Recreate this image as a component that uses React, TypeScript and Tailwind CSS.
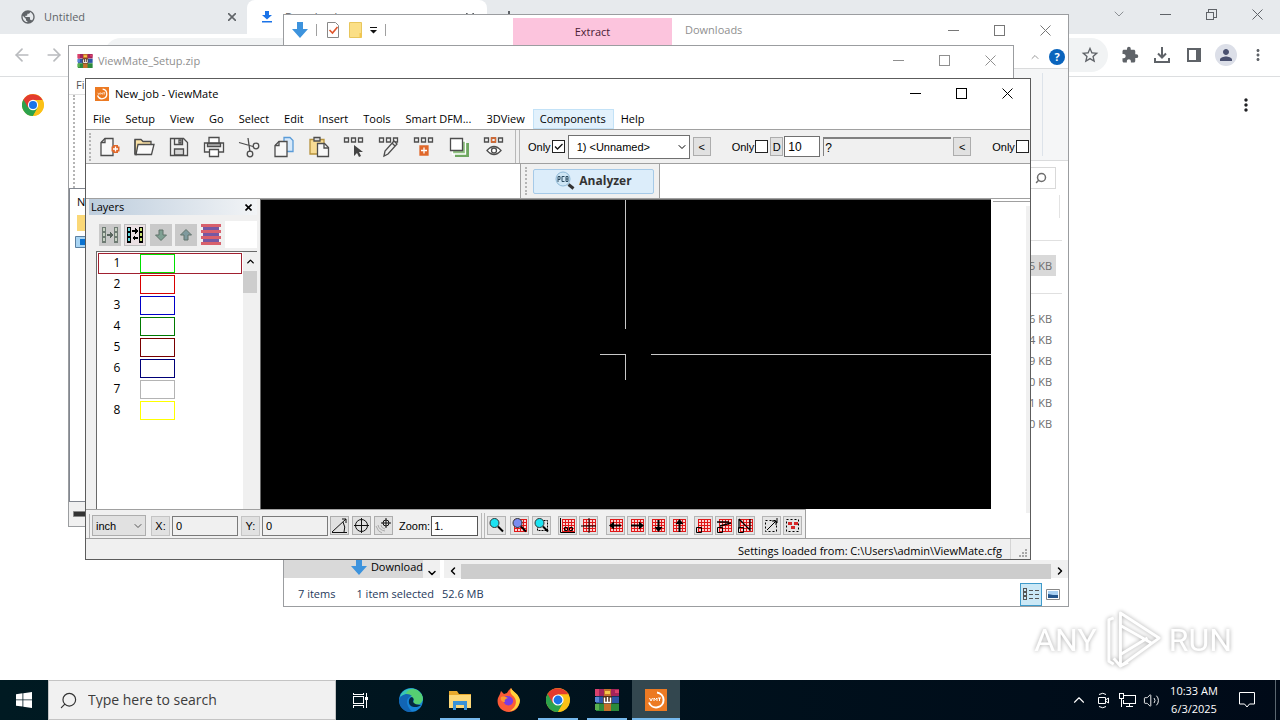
import React from 'react';
import {
  ArrowLeft,
  ArrowRight,
  ChevronDown,
  ChevronLeft,
  ChevronRight,
  ChevronUp,
  Search,
  Volume2,
} from 'lucide-react';
import { MdExtension, MdMoreVert, MdPerson, MdPublic, MdStarOutline } from 'react-icons/md';

type IconProps = { className?: string };

/* ---------- shared pieces ---------- */

function CaptionButtons({ restore = false, className = '' }: { restore?: boolean; className?: string }) {
  return (
    <div className={`flex h-full shrink-0 ${className}`}>
      <button aria-label="Minimize" className="flex w-[46px] items-center justify-center">
        <svg width="11" height="11" viewBox="0 0 11 11" stroke="currentColor" shapeRendering="crispEdges">
          <path d="M0 5.5h11" />
        </svg>
      </button>
      <button aria-label="Maximize" className="flex w-[46px] items-center justify-center">
        <svg width="11" height="11" viewBox="0 0 11 11" stroke="currentColor" fill="none" shapeRendering="crispEdges">
          {restore ? <path d="M.5 3.5h7v7h-7zM2.5 3V.5h8v8H8" /> : <path d="M.5.5h10v10H.5z" />}
        </svg>
      </button>
      <button aria-label="Close" className="flex w-[46px] items-center justify-center">
        <svg width="11" height="11" viewBox="0 0 11 11" stroke="currentColor">
          <path d="M.5.5l10 10M10.5.5l-10 10" />
        </svg>
      </button>
    </div>
  );
}

function Grip({ className = '' }: IconProps) {
  return <div className={`w-0 border-l-2 border-dotted border-[#b5b5b5] ${className}`} />;
}

function ChromeLogo({ className }: IconProps) {
  return (
    <svg className={className} viewBox="0 0 24 24">
      <circle cx="12" cy="12" r="12" fill="#fbc116" />
      <path d="M12 12L1.6 6A12 12 0 0 0 12 24l5.2-9z" fill="#2ca24c" />
      <path d="M1.6 6A12 12 0 0 1 22.4 6.5H12L6.8 15z" fill="#e33b2e" />
      <path d="M12 24a12 12 0 0 0 10.4-17.5H12l5.2 8.5z" fill="#fbc116" />
      <circle cx="12" cy="12" r="5.6" fill="#fff" />
      <circle cx="12" cy="12" r="4.4" fill="#1a73e8" />
    </svg>
  );
}

function WinRarLogo({ className }: IconProps) {
  return (
    <svg className={className} viewBox="0 0 24 22">
      <path d="M1 0h23v7H1z" fill="#a3245a" />
      <path d="M1 7.5h23v6.5H1z" fill="#2d55a5" />
      <path d="M1 14.5h23V22H1z" fill="#2c8a3c" />
      <path d="M0 0h4v7H0zM20 1h4v3h-4z" fill="#d9416c" />
      <path d="M0 8h4v5H0z" fill="#5a87d6" />
      <path d="M0 15h4v6H0z" fill="#58b04f" />
      <path d="M9 0h7v22H9z" fill="#c4702b" />
      <path d="M10 2h5v3h-5z" fill="#f5c94a" />
      <path d="M8 7h9v8H8z" fill="#4c2b17" />
      <path d="M9.5 8.5v5h6v-5M12.5 8v5" fill="none" stroke="#fff" strokeWidth="1.5" />
    </svg>
  );
}

function ViewMateLogo({ className }: IconProps) {
  return (
    <svg className={className} viewBox="0 0 22 22">
      <rect width="22" height="22" fill="#ec7a23" />
      <path d="M12 3.500a7.500 7.500 0 1 1-8 10" fill="none" stroke="#fff" strokeWidth="2" />
      <path d="M4.500 9l1.500 3 1.500-3M9 12V9l1.500 1.500L12 9v3M13 9h3M14.500 9v3" fill="none" stroke="#fff" />
    </svg>
  );
}

function DownArrow({ className }: IconProps) {
  return (
    <svg className={className} viewBox="0 0 16 16">
      <path d="M5 0h6v7h5l-8 9-8-9h5z" fill="#3d93dd" />
    </svg>
  );
}

/* ---------- browser ---------- */

function Browser() {
  return (
    <div className="flex min-h-0 flex-1 flex-col bg-white text-[#5f6368]">
      <div className="flex h-[34px] shrink-0 bg-[#e7eaed]">
        <div className="flex w-[247px] items-center pr-[11px] pl-5 text-[11px] text-[#606468]">
          <MdPublic className="mr-2 size-4" />
          <span>Untitled</span>
          <button aria-label="Close tab" className="ml-auto flex w-2 items-center justify-center">
            <svg width="8" height="8" viewBox="0 0 8 8" stroke="currentColor" strokeWidth="1.6">
              <path d="M0 0l8 8M8 0L0 8" />
            </svg>
          </button>
        </div>
        <div className="flex w-[240px] items-center rounded-t-lg bg-white pr-[13px] pl-[14px] text-[11px]">
          <svg className="mr-3 size-3" viewBox="0 0 12 12" fill="#1a73e8">
            <path d="M4 0h4v4h3L6 8.500 1 4h3zM1 10h10v1.500H1z" />
          </svg>
          <span>Downloads</span>
          <button aria-label="Close tab" className="ml-auto flex w-2 items-center justify-center">
            <svg width="8" height="8" viewBox="0 0 8 8" stroke="currentColor" strokeWidth="1.6">
              <path d="M0 0l8 8M8 0L0 8" />
            </svg>
          </button>
        </div>
        <button aria-label="New tab" className="flex w-11 items-center justify-center">
          <svg width="12" height="12" viewBox="0 0 12 12" stroke="currentColor" strokeWidth="2"><path d="M6 0v12M0 6h12" /></svg>
        </button>
        <div className="ml-auto flex h-[28px]">
          <button aria-label="Search tabs" className="flex w-[46px] items-center justify-center">
            <ChevronDown className="size-4" strokeWidth={1} />
          </button>
          <CaptionButtons restore />
        </div>
      </div>
      <div className="flex h-[43px] shrink-0 items-center border-b border-[#dcdee0] pr-[6px] pl-3">
        <button aria-label="Back" className="mr-3 text-[#b9bbbe]"><ArrowLeft className="size-5" strokeWidth={2} /></button>
        <button aria-label="Forward" className="mr-10 text-[#b9bbbe]"><ArrowRight className="size-5" strokeWidth={2} /></button>
        <div className="flex h-[34px] flex-1 items-center justify-end rounded-full bg-[#f1f3f4] pr-2">
          <button aria-label="Bookmark"><MdStarOutline className="size-5" /></button>
        </div>
        <div className="ml-[6px] flex items-center">
          <button aria-label="Extensions" className="flex w-8 justify-center"><MdExtension className="size-[18px]" /></button>
          <button aria-label="Downloads" className="flex w-8 justify-center">
            <svg className="size-4" viewBox="0 0 16 16" fill="none" stroke="currentColor" strokeWidth="2">
              <path d="M8 0v10M4 6.500l4 4 4-4M1 11v4h14v-4" />
            </svg>
          </button>
          <button aria-label="Side panel" className="flex w-8 justify-center">
            <svg className="h-[14px] w-[14px]" viewBox="0 0 14 14">
              <path d="M1 1h12v12H1z" fill="none" stroke="currentColor" strokeWidth="2" />
              <path d="M9 0h5v14H9z" fill="currentColor" />
            </svg>
          </button>
          <button aria-label="Profile" className="flex w-8 justify-center">
            <span className="flex size-[22px] items-center justify-center rounded-full bg-[#dcdfe8] text-[#4a5170]"><MdPerson className="size-[18px]" /></span>
          </button>
          <button aria-label="Menu" className="flex w-8 justify-center"><MdMoreVert className="size-[18px]" /></button>
        </div>
      </div>
      <div className="flex items-start justify-between pt-4 pr-6 pl-[22px]">
        <ChromeLogo className="mt-px size-[22px]" />
        <button aria-label="More actions" className="pt-[2px] text-[#202124]"><MdMoreVert className="size-5" /></button>
      </div>
    </div>
  );
}

function Watermark() {
  return (
    <div className="absolute right-12 bottom-2 flex h-16 items-center gap-2 font-['Roboto',sans-serif] text-[32px] leading-none text-white drop-shadow-[0_0_2px_rgba(0,0,0,0.35)]">
      <span>ANY</span>
      <svg className="h-[62px] w-[56px]" viewBox="0 0 58 62" fill="none" stroke="#fff" strokeWidth="3" strokeLinejoin="round">
        <path d="M16 3l40 26-40 29zM16 16l32 18M16 46l28-17M9 8L4 10v43l5 3M9 50l7 8 8-4" />
      </svg>
      <span>RUN</span>
    </div>
  );
}

/* ---------- file explorer ---------- */

const sizes = ['6 KB', '4 KB', '9 KB', '0 KB', '1 KB', '0 KB'];

function Explorer() {
  return (
    <section className="absolute top-[14px] right-[211px] bottom-[73px] left-[283px] flex flex-col border border-[#9b9da0] bg-white text-[#6d6d6d]">
      <header className="flex h-[30px] shrink-0 items-center">
        <DownArrow className="ml-2 size-4" />
        <span className="mx-2 h-3 w-px bg-[#a0a0a0]" />
        <svg className="ml-[2px] h-4 w-3" viewBox="0 0 12 16">
          <path d="M.5.5h8l3 3v12H.5z" fill="#fff" stroke="#888" />
          <path d="M2.500 8l3 3 5-6" fill="none" stroke="#e0552b" strokeWidth="1.6" />
        </svg>
        <svg className="ml-[10px] h-4 w-[13px]" viewBox="0 0 13 16">
          <path d="M.5.5h12v15H.5z" fill="#fbdf86" stroke="#e8c65c" />
          <path d="M10.500 11h2v4.500h-2z" fill="#f3c64e" />
        </svg>
        <svg className="ml-2 h-[7px] w-[7px]" viewBox="0 0 7 7" fill="#111"><path d="M0 0h7v1H0zM0 3h7L3.500 6.500z" /></svg>
        <span className="mx-2 h-3 w-px bg-[#a0a0a0]" />
        <div className="ml-[119px] flex h-[27px] w-[159px] items-center justify-center self-end bg-[#fcc4dd] text-[#4a2034]">Extract</div>
        <span className="ml-[13px] text-[#8f8f8f]">Downloads</span>
        <CaptionButtons className="ml-auto text-[#777]" />
      </header>
      <div className="flex h-[23px] shrink-0 items-center justify-end pr-[3px]">
        <ChevronUp className="mr-2 size-3 text-[#9a9a9a]" />
        <span className="flex size-4 items-center justify-center rounded-full bg-[#0a64bd] text-[11px] font-bold text-white">?</span>
      </div>
      <div className="flex h-[93px] shrink-0 justify-end border-y border-[#dadbdc] bg-[#f5f6f7] py-1">
        <span className="mr-[25px] w-px bg-[#dde3ea]" />
      </div>
      <div className="flex h-[34px] shrink-0 items-center justify-end pr-3">
        <div className="flex h-[22px] w-[200px] items-center justify-end border border-[#d9d9d9] pr-2">
          <Search className="size-3 -scale-x-100" strokeWidth={3} />
        </div>
      </div>
      <div className="mr-2 flex h-[23px] shrink-0 border-r border-[#e3e3e3]" />
      <div className="flex min-h-0 flex-1 flex-col items-end overflow-hidden pt-[22px]">
        <div className="mr-[6px] w-[200px] border-t border-[#e0e0e0]" />
        <div className="mt-[14px] mr-3 flex h-[21px] w-[200px] items-center justify-end bg-[#d9d9d9] pr-1">5 KB</div>
        <div className="mt-[17px] mr-[6px] w-[200px] border-t border-[#e0e0e0]" />
        <ul className="mt-[14px] mr-3 w-[200px] pr-1 text-right">
          {sizes.map((size, i) => (
            <li key={i} className="h-[21px] leading-[21px]">{size}</li>
          ))}
        </ul>
      </div>
      <div className="flex h-[26px] shrink-0 pb-1 text-black">
        <div className="flex w-[139px] items-center justify-end bg-[#d9d9d9]">
          <DownArrow className="mr-1 size-4" />
          <span>Download</span>
        </div>
        <div className="mt-1 flex w-[17px] items-center justify-center bg-[#f0f0f0] pt-2"><ChevronDown className="size-3" strokeWidth={3} /></div>
        <div className="mt-1 ml-1 flex flex-1 items-center bg-[#f0f0f0] pt-1">
          <span className="flex w-[17px] justify-center"><ChevronLeft className="size-3" strokeWidth={3} /></span>
          <span className="h-[15px] flex-1 bg-[#cdcdcd]" />
          <span className="flex w-[17px] justify-center"><ChevronRight className="size-3" strokeWidth={3} /></span>
        </div>
      </div>
      <footer className="flex h-6 shrink-0 items-center pl-[14px] text-[#1e395b]">
        <span>7 items</span>
        <span className="ml-[21px]">1 item selected</span>
        <span className="ml-2">52.6 MB</span>
        <button aria-label="Details view" className="ml-auto flex h-[23px] w-[22px] items-center justify-center border border-[#3f9bcb] bg-[#cbe8f6]">
          <svg className="h-[13px] w-[16px]" viewBox="0 0 16 13" fill="none" stroke="#555" shapeRendering="crispEdges">
            <path d="M.5.5h3v3h-3zM.5 4.500h3v3h-3zM.5 8.500h3v3h-3zM6 2.500h4M12 2.500h4M6 6.500h4M12 6.500h4M6 10.500h4M12 10.500h4" />
          </svg>
        </button>
        <button aria-label="Thumbnail view" className="mr-2 ml-1">
          <svg className="h-[11px] w-[14px]" viewBox="0 0 14 11">
            <path d="M.5.5h13v10H.5z" fill="#fff" stroke="#888" />
            <path d="M2 2h10v7H2z" fill="#a9d0f2" />
            <path d="M2 5l5 1 5 0v3H2z" fill="#24558c" />
          </svg>
        </button>
      </footer>
    </section>
  );
}

/* ---------- archive window ---------- */

function ArchiveWindow() {
  return (
    <section className="absolute top-[45px] right-[266px] bottom-[153px] left-[68px] flex flex-col border border-[#9b9da0] bg-white text-[#555]">
      <header className="flex h-[29px] shrink-0 items-center text-[#8f8f8f]">
        <WinRarLogo className="mr-[5px] ml-2 h-[14px] w-4" />
        <span>ViewMate_Setup.zip</span>
        <CaptionButtons className="ml-auto" />
      </header>
      <nav className="flex h-5 shrink-0 items-center border-b border-[#e0e0e0] pl-[7px]">Fi</nav>
      <div className="flex h-[93px] shrink-0 pl-1"><Grip className="h-full" /></div>
      <div className="min-h-0 flex-1 overflow-hidden border border-[#828790] bg-white">
        <div className="h-[26px] pl-[7px] leading-[26px] text-black">N</div>
        <svg className="ml-[7px] block h-4 w-5" viewBox="0 0 20 16"><path d="M0 0h20v16H0z" fill="#fbd877" /></svg>
        <svg className="mt-[5px] ml-[5px] block h-3 w-4" viewBox="0 0 16 12">
          <path d="M.5.5h15v11H.5z" fill="#a8d4f3" stroke="#5a7fa0" />
          <path d="M5 3h8v6H5z" fill="#0a72d0" />
        </svg>
      </div>
      <footer className="flex h-6 shrink-0 items-center bg-[#f0f0f0] pl-1">
        <svg className="h-[6px] w-4" viewBox="0 0 16 6"><path d="M.5.5h15v5H.5z" fill="#333" stroke="#888" /></svg>
      </footer>
    </section>
  );
}

/* ---------- ViewMate ---------- */

const menus = ['File', 'Setup', 'View', 'Go', 'Select', 'Edit', 'Insert', 'Tools', 'Smart DFM...', '3DView', 'Components', 'Help'];

const boxes = (
  <path d="M2.500 3h4v4h-4zM9.500 3h4v4h-4zM16.500 3h4v4h-4z" />
);

const tools: { label: string; art: React.ReactNode }[] = [
  {
    label: 'New',
    art: (
      <>
        <path d="M8 3.500h8v17H4V7.500z" fill="#f8f8f8" /><path d="M8 3.500v4H4" />
        <path d="M18.500 10v8M14.500 14h8" stroke="#e0682b" strokeWidth="5" />
        <path d="M18.500 11.500v5M16 14h5" stroke="#fff" />
      </>
    ),
  },
  {
    label: 'Open',
    art: <><path d="M3 19V4.500h6l2 2h8V10" fill="#fbe2a6" /><path d="M4 19.500L6 9.500h16l-2.500 10z" fill="#fafafa" /><path d="M3 4.500v15h2" /></>,
  },
  {
    label: 'Save',
    art: <><path d="M3.500 3.500h13l4 4v13h-17z" fill="#f0f0f0" /><path d="M7.500 3.500v6h8v-6" /><path d="M12 5h2v3h-2z" /><path d="M7.500 20v-6h9v6z" fill="#d6d6d6" /></>,
  },
  {
    label: 'Print',
    art: <><path d="M7 8V2.500h10V8" fill="#fff" /><path d="M2.500 8h19v9h-19z" fill="#f5f5f5" /><path d="M5.500 8.500h13v3h-13z" fill="#bbb" /><path d="M7.500 14.500h9v7h-9z" fill="#fff" /></>,
  },
  {
    label: 'Cut',
    art: <><path d="M2 7.500l14 4M11 3l2 14" /><circle cx="19" cy="11" r="2.8" /><circle cx="13" cy="19" r="2.8" /></>,
  },
  {
    label: 'Copy',
    art: <><path d="M12 2.500h6l3 3v11h-9z" fill="#d7e9fa" stroke="#5a9bd8" /><path d="M7 6.500h8v15H3V10.500z" fill="#f8f8f8" /><path d="M7 6.500v4H3" /></>,
  },
  {
    label: 'Paste',
    art: <><path d="M3 4.500h14V19H3z" fill="#f8dc95" stroke="#b6923c" /><path d="M7 2.500h6v3.500H7z" fill="#ddd" /><path d="M10.500 8.500h7l4 4v9h-11z" fill="#f8f8f8" /><path d="M17 9v4h4" /></>,
  },
  { label: 'Select components', art: <>{boxes}<path d="M12 10v11l3-3 2 4 2-1-2-4h4z" fill="#444" stroke="none" /></> },
  { label: 'Edit components', art: <>{boxes}<path d="M7 21l1-5 9-10 3 3-9 10zM15 8l3 3" fill="#f0f0f0" /></> },
  {
    label: 'Add component',
    art: <>{boxes}<path d="M8 11h8v9H8z" fill="#e0682b" stroke="#e0682b" /><path d="M12 12.500v6M9 15.500h6" stroke="#fff" /></>,
  },
  {
    label: 'Component layers',
    art: <><path d="M8 8h14v14H8z" fill="#6fa860" stroke="none" /><path d="M5.500 6h13v13h-13z" fill="#8fc080" stroke="#fff" /><path d="M3.500 3.500h12v12h-12z" fill="#fff" /></>,
  },
  {
    label: 'Show components',
    art: <>{boxes}<path d="M9.500 3h4v4h-4z" stroke="#e0682b" /><path d="M5 15.500q7-8 14 0q-7 8-14 0z" fill="#fff" /><circle cx="12" cy="15.5" r="2.5" /></>,
  },
];

function CheckBox({ label, checked = false }: { label: string; checked?: boolean }) {
  return (
    <label className="flex shrink-0 items-center gap-px">
      <span>{label}</span>
      <span className="relative flex size-[13px]">
        <input type="checkbox" defaultChecked={checked} className="peer size-[13px] appearance-none border border-[#222] bg-white" />
        <svg className="pointer-events-none absolute inset-0 hidden size-[13px] peer-checked:block" viewBox="0 0 13 13" fill="none" stroke="#111" strokeWidth="1.3">
          <path d="M3 6.500l2.500 2.500L10.500 4" />
        </svg>
      </span>
    </label>
  );
}

function SmallButton({ children, className = 'w-[19px]' }: { children: React.ReactNode; className?: string }) {
  return (
    <button className={`flex h-[19px] shrink-0 items-center justify-center border border-[#adadad] bg-[#e1e1e1] ${className}`}>
      {children}
    </button>
  );
}

const layers = [
  'border-[#00e000]',
  'border-[#d80000]',
  'border-[#0000c8]',
  'border-[#007800]',
  'border-[#780000]',
  'border-[#000078]',
  'border-[#b4b4b4]',
  'border-[#ffff00]',
];

function LayersPanel() {
  return (
    <aside className="flex w-[174px] shrink-0 flex-col bg-[#f0f0f0] px-[3px]">
      <div className="flex h-4 shrink-0 items-center justify-between bg-linear-to-r from-[#bdcddd] to-[#f2f4f6] pl-[2px]">
        <span>Layers</span>
        <button aria-label="Close layers" className="flex w-[17px] justify-center">
          <svg width="7" height="7" viewBox="0 0 7 7" stroke="#000" strokeWidth="1.6"><path d="M.5.5l6 6M6.500.5l-6 6" /></svg>
        </button>
      </div>
      <div className="mt-[5px] ml-[7px] flex h-[29px] shrink-0 items-center gap-[3px] pl-[3px]">
        <button aria-label="Compare layers" className="flex size-[22px] items-center justify-center bg-[#c9c9c9]">
          <svg width="18" height="18" viewBox="0 0 18 18" shapeRendering="crispEdges">
            <path d="M1 1h4v16H1zM13 1h4v16h-4z" fill="#6e7b73" />
            <path d="M2 2h2v3H2zM2 7h2v3H2zM2 12h2v3H2zM14 2h2v3h-2zM14 7h2v3h-2zM14 12h2v3h-2z" fill="#c6d0c2" />
            <path d="M6 8h3V6l3 3-3 3v-2H6z" fill="#59665f" />
          </svg>
        </button>
        <button aria-label="Swap layers" className="flex size-[22px] items-center justify-center border border-[#bbb] bg-[#eadfe2]">
          <svg width="18" height="18" viewBox="0 0 18 18" shapeRendering="crispEdges">
            <path d="M1 1h4v16H1zM13 1h4v16h-4z" fill="#000" />
            <path d="M2 2h2v3H2zM2 7h2v3H2zM2 12h2v3H2z" fill="#5fd6dc" />
            <path d="M14 2h2v3h-2zM14 7h2v3h-2zM14 12h2v3h-2z" fill="#c8e070" />
            <path d="M6 4h3V2l3 3-3 3V6H6zM12 11H9V9l-3 3 3 3v-2h3z" fill="#000" />
          </svg>
        </button>
        <button aria-label="Move down" className="ml-px flex size-[22px] items-center justify-center bg-[#c9c9c9]">
          <svg width="12" height="12" viewBox="0 0 12 12"><path d="M4 1h4v5h3.500L6 11.500.5 6H4z" fill="#7fa093" stroke="#60736b" /></svg>
        </button>
        <button aria-label="Move up" className="flex size-[22px] items-center justify-center bg-[#c9c9c9]">
          <svg width="12" height="12" viewBox="0 0 12 12"><path d="M4 11h4V6h3.500L6 .5.5 6H4z" fill="#7f9a9e" stroke="#60736b" /></svg>
        </button>
        <button aria-label="Layer stack" className="flex size-[22px] items-center justify-center">
          <svg width="20" height="21" viewBox="0 0 20 21" shapeRendering="crispEdges">
            <path d="M0 0h20v3H0zM0 6h20v3H0zM0 12h20v3H0zM0 18h20v3H0z" fill="#d8606c" />
            <path d="M2 3h16v3H2zM2 9h16v3H2zM2 15h16v3H2z" fill="#7558a4" />
          </svg>
        </button>
        <span className="h-[27px] flex-1 bg-white" />
      </div>
      <div className="mt-[2px] ml-[7px] flex min-h-0 flex-1 border-t border-l border-[#696969] bg-white">
        <ul className="min-w-0 flex-1 px-px pt-px text-[12px]">
          {layers.map((color, i) => (
            <li
              key={i}
              className={`flex h-[21px] items-center border ${i === 0 ? 'border-[#a02030]' : 'border-transparent'}`}
            >
              <span className="w-[36px] pb-[2px] text-center leading-[17px]">{i + 1}</span>
              <span className={`ml-[5px] h-[19px] w-[35px] border ${color}`} />
            </li>
          ))}
        </ul>
        <div className="flex w-[14px] flex-col items-center bg-[#f0f0f0]">
          <ChevronUp className="my-1 size-[11px]" strokeWidth={3} />
          <span className="h-[22px] w-full bg-[#cdcdcd]" />
        </div>
      </div>
    </aside>
  );
}

const mesh = (
  <>
    <path d="M3 2h12v12H3z" fill="#fbd3d3" />
    <path d="M3.500 2v12M6.500 2v12M9.500 2v12M12.500 2v12M15.500 2v12M3 2.500h13M3 5.500h13M3 8.500h13M3 11.500h13M3 14.500h13" stroke="#e01818" shapeRendering="crispEdges" />
  </>
);
const lens = (
  <>
    <circle cx="6.5" cy="6" r="4.5" fill="#1be3f2" stroke="#333" />
    <path d="M10 9.500l5 5" stroke="#000" strokeWidth="2" />
  </>
);
const pad = <path d="M1.500 10.500h5v5h-5z" stroke="#000" fill="none" />;

const viewTools: { label: string; gap: string; art: React.ReactNode }[] = [
  { label: 'Zoom', gap: 'ml-0', art: lens },
  { label: 'Zoom grid', gap: 'ml-1', art: <>{mesh}<circle cx="6.5" cy="6" r="4.5" fill="#7a8cf0" stroke="#333" /><path d="M10 9.500l5 5" stroke="#000" strokeWidth="2" /></> },
  { label: 'Zoom window', gap: 'ml-[3px]', art: <><path d="M4.500 3.500h10v10h-10z" stroke="#000" fill="none" strokeDasharray="2 1" />{lens}</> },
  { label: 'Grid origin', gap: 'ml-[7px]', art: <>{mesh}<path d="M1.500 1v14.500H16M5.500 10.500h3v3h-3zM10.500 10.500h3v3h-3z" stroke="#000" fill="none" /></> },
  { label: 'Grid center', gap: 'ml-[2px]', art: <>{mesh}<path d="M9 1v15M1 9h15" stroke="#000" /></> },
  { label: 'Pan left', gap: 'ml-2', art: <>{mesh}<path d="M2 8.500l5-4v3h7v2H7v3z" fill="#000" /></> },
  { label: 'Pan right', gap: 'ml-[2px]', art: <>{mesh}<path d="M16 8.500l-5-4v3H3v2h8v3z" fill="#000" /></> },
  { label: 'Pan down', gap: 'ml-[2px]', art: <>{mesh}<path d="M9.500 15l-4-5h3V3h2v7h3z" fill="#000" /></> },
  { label: 'Pan up', gap: 'ml-[2px]', art: <>{mesh}<path d="M9.500 2l-4 5h3v8h2V7h3z" fill="#000" /></> },
  { label: 'Snap pad', gap: 'ml-[6px]', art: <>{mesh}{pad}</> },
  { label: 'Snap track', gap: 'ml-[2px]', art: <>{mesh}<path d="M1 5h12M4 9l11-3" stroke="#000" strokeWidth="1.5" />{pad}</> },
  { label: 'Snap corner', gap: 'ml-[2px]', art: <>{mesh}<path d="M2 2l11 11V2M2 2v10" stroke="#000" fill="none" strokeWidth="1.3" />{pad}</> },
  { label: 'Measure', gap: 'ml-[7px]', art: <><path d="M2.500 3.500h11v11h-11z" stroke="#000" fill="none" strokeDasharray="2 2" /><path d="M4 13l9-9M9 4h4v4M14 1v5" stroke="#000" fill="none" /></> },
  { label: 'Select pads', gap: 'ml-[2px]', art: <><path d="M2.500 2.500h12v12h-12z" stroke="#000" fill="none" strokeDasharray="2 2" /><path d="M4 5h4v3H4zM10 5h4v3h-4zM7 9h4v3H7z" fill="#d62828" /></> },
];

function Coordinate({ name }: { name: string }) {
  return (
    <label className="flex items-center gap-[2px]">
      <span className="flex h-[20px] w-[19px] items-center justify-center border border-[#c4c4c4] bg-[#e1e1e1]">{name}:</span>
      <input defaultValue="0" className="h-[20px] w-[66px] border border-[#7a7a7a] bg-[#f0f0f0] px-[3px]" />
    </label>
  );
}

function ViewMate() {
  return (
    <section className="absolute top-[78px] right-[249px] bottom-[120px] left-[85px] flex flex-col overflow-hidden border border-[#5c5c5c] bg-white text-black">
      <header className="flex h-[29px] shrink-0 items-center">
        <ViewMateLogo className="mr-[6px] ml-[9px] size-[14px]" />
        <span>New_job - ViewMate</span>
        <CaptionButtons className="ml-auto" />
      </header>
      <nav className="flex h-[21px] shrink-0 items-center">
        {menus.map(menu => (
          <button
            key={menu}
            className={`h-5 shrink-0 border pr-[7px] pl-[6px] ${menu === 'Components' ? 'border-[#c3e2f7] bg-[#e2f1fc]' : 'border-transparent'}`}
          >
            {menu}
          </button>
        ))}
      </nav>

      <div className="flex h-[35px] shrink-0 items-center overflow-hidden border-y border-[#a0a0a0] bg-[#f0f0f0] font-['Liberation_Sans',Arial,sans-serif]">
        <Grip className="ml-[3px] h-7" />
        <div className="flex shrink-0">
          {tools.map(tool => (
            <button key={tool.label} aria-label={tool.label} className="flex w-[35px] items-center justify-center">
              <svg width="24" height="24" viewBox="0 0 24 24" fill="none" stroke="#4d4d4d" strokeWidth="1.3">{tool.art}</svg>
            </button>
          ))}
        </div>
        <span className="ml-1 h-full w-[5px] shrink-0 border-x border-[#b8b8b8]" />
        <div className="ml-2 flex shrink-0 items-center">
          <CheckBox label="Only" checked />
          <div className="relative ml-[3px]">
            <select aria-label="Layer" className="h-6 w-[122px] appearance-none border border-[#707070] bg-white pr-5 pl-2">
              <option>1) &lt;Unnamed&gt;</option>
            </select>
            <ChevronDown className="pointer-events-none absolute top-[6px] right-[2px] size-3" strokeWidth={2} />
          </div>
          <SmallButton className="ml-[3px] w-[18px]">&lt;</SmallButton>
        </div>
        <div className="ml-[21px] flex shrink-0 items-center">
          <CheckBox label="Only" />
          <SmallButton className="ml-[2px] w-[13px]">D</SmallButton>
          <input aria-label="D code" defaultValue="10" className="ml-px h-[21px] w-[36px] border border-[#707070] bg-white px-[3px] text-[12px]" />
          <input aria-label="D code description" defaultValue="?" className="ml-[3px] h-[19px] w-[128px] border-t-2 border-l border-[#808080] bg-[#f0f0f0] px-px text-[12px]" />
          <SmallButton className="ml-[2px] w-[18px]">&lt;</SmallButton>
        </div>
        <div className="ml-[21px] flex shrink-0"><CheckBox label="Only" /></div>
      </div>

      <div className="flex h-[34px] shrink-0">
        <div className="ml-[434px] flex w-[140px] items-center border-x border-[#a0a0a0] bg-[#f0f0f0]">
          <Grip className="ml-1 h-7" />
          <button className="ml-[6px] flex h-[25px] w-[121px] items-center justify-center gap-1 rounded-xs border border-[#a6cae8] bg-[#dcedfa] text-[12px] font-bold text-[#333]">
            <svg width="20" height="20" viewBox="0 0 20 20" fill="none">
              <circle cx="8" cy="8" r="7" fill="#cfe6f5" stroke="#8fb9d6" />
              <path d="M3 11V5.500h2v3H3M9.500 5.500H7v5h2.500M11 5.500h2v5h-2zM11 8h2" stroke="#2b4b60" />
              <path d="M13.500 13.500l5 4" stroke="#333" strokeWidth="3" />
            </svg>
            Analyzer
          </button>
        </div>
      </div>

      <div className="flex min-h-0 flex-1 border-t border-[#a0a0a0]">
        <LayersPanel />
        <div className="min-w-0 flex-1 border-t border-l border-[#696969] bg-black">
          <svg className="block h-full w-full" stroke="#c8c8c8" shapeRendering="crispEdges">
            <path d="M364.500 0v129M364.500 154v26M339 154.500h26" />
            <line x1="390" y1="154.5" x2="100%" y2="154.5" />
          </svg>
        </div>
        <div className="mt-[2px] ml-[2px] w-[37px] shrink-0 border-t border-[#a0a0a0]">
          <div className="mt-1 ml-auto h-full w-[4px] bg-[#f0f0f0]" />
        </div>
      </div>

      <div className="flex h-[30px] shrink-0 items-center border-b border-[#a0a0a0] font-['Liberation_Sans',Arial,sans-serif]">
        <div className="flex h-full shrink-0 items-center border-t border-r border-[#a0a0a0] bg-[#f0f0f0] px-[3px] pt-[3px]">
          <span className="h-6 w-px bg-[#b0b0b0]" />
          <div className="relative ml-[2px]">
            <select aria-label="Units" className="h-[21px] w-[54px] appearance-none border border-[#adadad] bg-[#e1e1e1] pl-[3px]">
              <option>inch</option>
            </select>
            <ChevronDown className="pointer-events-none absolute top-[5px] right-[2px] size-3 text-[#555]" />
          </div>
          <div className="ml-[5px] flex gap-[3px]">
            <Coordinate name="X" />
            <Coordinate name="Y" />
          </div>
          <div className="ml-[2px] flex gap-[3px]">
            <SmallButton>
              <svg width="17" height="17" viewBox="0 0 17 17" fill="none" stroke="#111"><path d="M1 15.500h15M1 15L15 2M11 2h4v4M12 5q3 5 1 10" /></svg>
            </SmallButton>
            <SmallButton>
              <svg width="17" height="17" viewBox="0 0 17 17" fill="none" stroke="#111"><circle cx="8.5" cy="8.5" r="6" /><path d="M8.500 1v15M1 8.500h15" /></svg>
            </SmallButton>
            <SmallButton>
              <svg width="17" height="17" viewBox="0 0 17 17" fill="none" stroke="#111"><circle cx="11" cy="6" r="3" /><path d="M11 1v10M6 6h10" /><path d="M3 8q1 5 7 6M1 9q2 6 6 7M6 8q0 3 4 4" stroke="#aaa" /></svg>
            </SmallButton>
          </div>
          <label className="ml-[6px] flex items-center gap-px">
            Zoom:
            <input defaultValue="1." className="h-[20px] w-[47px] border border-[#555] bg-white px-[2px]" />
          </label>
          <span className="ml-[3px] h-full w-[4px] border-x border-[#b8b8b8]" />
          <div className="ml-[2px] flex">
            {viewTools.map(tool => (
              <button
                key={tool.label}
                aria-label={tool.label}
                className={`flex size-[19px] shrink-0 items-center justify-center border border-[#b4b4b4] bg-[#e4e4e4] ${tool.gap}`}
              >
                <svg width="17" height="17" viewBox="0 0 17 17" className="shrink-0">{tool.art}</svg>
              </button>
            ))}
          </div>
        </div>
      </div>
      <footer className="flex h-5 shrink-0 items-center justify-end bg-[#f0f0f0]">
        <span className="pt-[3px]">Settings loaded from: C:\Users\admin\ViewMate.cfg</span>
        <span className="ml-2 h-full w-px bg-[#d5d5d5]" />
        <svg className="mr-[2px] ml-[7px] h-[10px] w-[10px] self-end" viewBox="0 0 10 10" fill="#a8a8a8">
          <path d="M7 0h2v2H7zM7 3h2v2H7zM4 3h2v2H4zM7 6h2v2H7zM4 6h2v2H4zM1 6h2v2H1z" />
        </svg>
      </footer>
    </section>
  );
}

/* ---------- taskbar ---------- */

function EdgeLogo() {
  return (
    <svg className="size-6" viewBox="0 0 24 24">
      <circle cx="12" cy="12" r="12" fill="#1683d6" />
      <path d="M1 8.500C4-1 18-3 23 7c3 7-3 10-8 8.500 2-6-6-10-14-7z" fill="#38c6b4" />
      <path d="M15 1c8 2 11 10 7 14-2 2-7 2-8 0 3-5-3-9-7-8 0-5 5-6 8-6z" fill="#56cf72" />
      <path d="M0 12c2-6 9-8 13-4-6 1-6 8-3 12 1 2 3 4 5 3.500C7 26 0 20 0 12z" fill="#1265b4" />
      <path d="M13 9c-4 1-4 7-1 9 3 2 8 1 10-1-3 0-8-1-8-4 1-1 1-3-1-4z" fill="#052840" />
    </svg>
  );
}

function FolderLogo() {
  return (
    <svg className="h-5 w-[22px]" viewBox="0 0 22 20">
      <path d="M0 1h8l2 3h12v6H0z" fill="#e8a92c" />
      <path d="M0 5h22v13H0z" fill="#fdd878" />
      <path d="M4 11h14v9h-3v-5H7v5H4z" fill="#3a92d6" />
    </svg>
  );
}

function FirefoxLogo() {
  return (
    <svg className="size-6" viewBox="0 0 24 24">
      <path d="M3 6l1-3 3 3 3-1c1-2 3-4 4-5 1 3 4 4 6 7 6 8 0 17-8 17S-1 17 1 10z" fill="#fb5a36" />
      <path d="M14 0c2 4 8 6 9 12 0 6-5 11-10 11 7-4 8-12 2-16-2-2-2-5-1-7z" fill="#ffd23a" />
      <path d="M7 9c3-2 8-1 9 3 1 5-5 7-8 4-2-2-2-5-1-7z" fill="#7a3ce0" />
      <path d="M4 9c3-1 5 0 7 1-3 1-4 2-3 4-3 0-5-2-4-5z" fill="#ff9a2e" />
    </svg>
  );
}

const apps: { name: string; icon: React.ReactNode; state: 'idle' | 'open' | 'active' }[] = [
  { name: 'Edge', icon: <EdgeLogo />, state: 'idle' },
  { name: 'File Explorer', icon: <FolderLogo />, state: 'open' },
  { name: 'Firefox', icon: <FirefoxLogo />, state: 'idle' },
  { name: 'Chrome', icon: <ChromeLogo className="size-6" />, state: 'open' },
  { name: 'WinRAR', icon: <WinRarLogo className="h-[22px] w-6" />, state: 'open' },
  { name: 'ViewMate', icon: <ViewMateLogo className="size-[22px]" />, state: 'active' },
];

function Taskbar() {
  return (
    <footer className="flex h-10 shrink-0 bg-linear-to-r from-[#001a22] to-[#000a18] text-white">
      <button aria-label="Start" className="flex w-12 items-center justify-center">
        <svg width="16" height="16" viewBox="0 0 16 16" fill="#fff"><path d="M0 2.200l6.500-.9v6.200H0zM7.300 1.200L16 0v7.500H7.300zM0 8.300h6.500v6.300L0 13.700zM7.300 8.300H16V16l-8.700-1.200z" /></svg>
      </button>
      <label className="flex w-[288px] items-center border border-[#c4c4c4] bg-[#f1f1f1] pl-[10px] text-[#333]">
        <Search className="mr-[10px] size-[19px] shrink-0 -scale-x-100" strokeWidth={1.5} />
        <input aria-label="Search" placeholder="Type here to search" className="w-full min-w-0 text-[14px] outline-none placeholder:text-[#3c3c3c]" />
      </label>
      <button aria-label="Task View" className="mr-[3px] flex w-12 items-center justify-center">
        <svg width="17" height="17" viewBox="0 0 17 17" fill="none" stroke="#fff" shapeRendering="crispEdges">
          <path d="M1.500 4.500h10v7h-10zM1.500 1v1.500h10V1M1.500 16v-2.500h10V16M14.500 1v15" />
          <path d="M13 5h3v3h-3z" fill="#fff" stroke="none" />
        </svg>
      </button>
      <div className="flex gap-px">
        {apps.map(app => (
          <button
            key={app.name}
            aria-label={app.name}
            className={`relative flex w-12 items-center justify-center ${app.state === 'active' ? 'bg-[#33474f]' : ''}`}
          >
            {app.icon}
            {app.state !== 'idle' && (
              <span className={`absolute bottom-0 h-[2px] bg-[#76b9ed] ${app.state === 'active' ? 'inset-x-0' : 'inset-x-1'}`} />
            )}
          </button>
        ))}
      </div>
      <div className="ml-auto flex items-center">
        <span className="flex w-6 justify-center"><ChevronUp className="size-[18px]" strokeWidth={1.5} /></span>
        <span className="flex w-6 justify-center">
          <svg width="13" height="17" viewBox="0 0 13 17" fill="none" stroke="#fff"><path d="M1.500 5.500h7v6h-7zM8.500 8l3-2v5l-3-2M2 2.500q4-2.500 7 0M2 14.500q4 2.500 7 0" /></svg>
        </span>
        <span className="flex w-6 justify-center">
          <svg width="17" height="15" viewBox="0 0 17 15" fill="none" stroke="#fff" shapeRendering="crispEdges"><path d="M5 2.500h11.500v8h-12V7M.5.5h4v5h-4zM2.500 5.500v8M10.500 11v3M7 13.500h7" /></svg>
        </span>
        <span className="flex w-6 justify-center"><Volume2 className="size-[17px]" strokeWidth={1.3} /></span>
        <div className="w-[62px] text-center leading-[18px]">
          <div>10:33 AM</div>
          <div>6/3/2025</div>
        </div>
        <button aria-label="Notifications" className="flex w-[44px] justify-center">
          <svg width="17" height="16" viewBox="0 0 17 16" fill="none" stroke="#fff"><path d="M.5.5h15v11.500h-5l-2.500 3-2.500-3h-5z" /></svg>
        </button>
        <span className="mr-1 ml-[6px] h-10 w-px bg-[#5a6670]" />
      </div>
    </footer>
  );
}

export default function App() {
  return (
    <main className="flex h-screen flex-col overflow-hidden bg-white font-['Open_Sans','Noto_Sans',sans-serif] text-[11px] leading-4">
      <div className="relative flex min-h-0 flex-1 flex-col">
        <Browser />
        <Watermark />
        <Explorer />
        <ArchiveWindow />
        <ViewMate />
      </div>
      <Taskbar />
    </main>
  );
}
